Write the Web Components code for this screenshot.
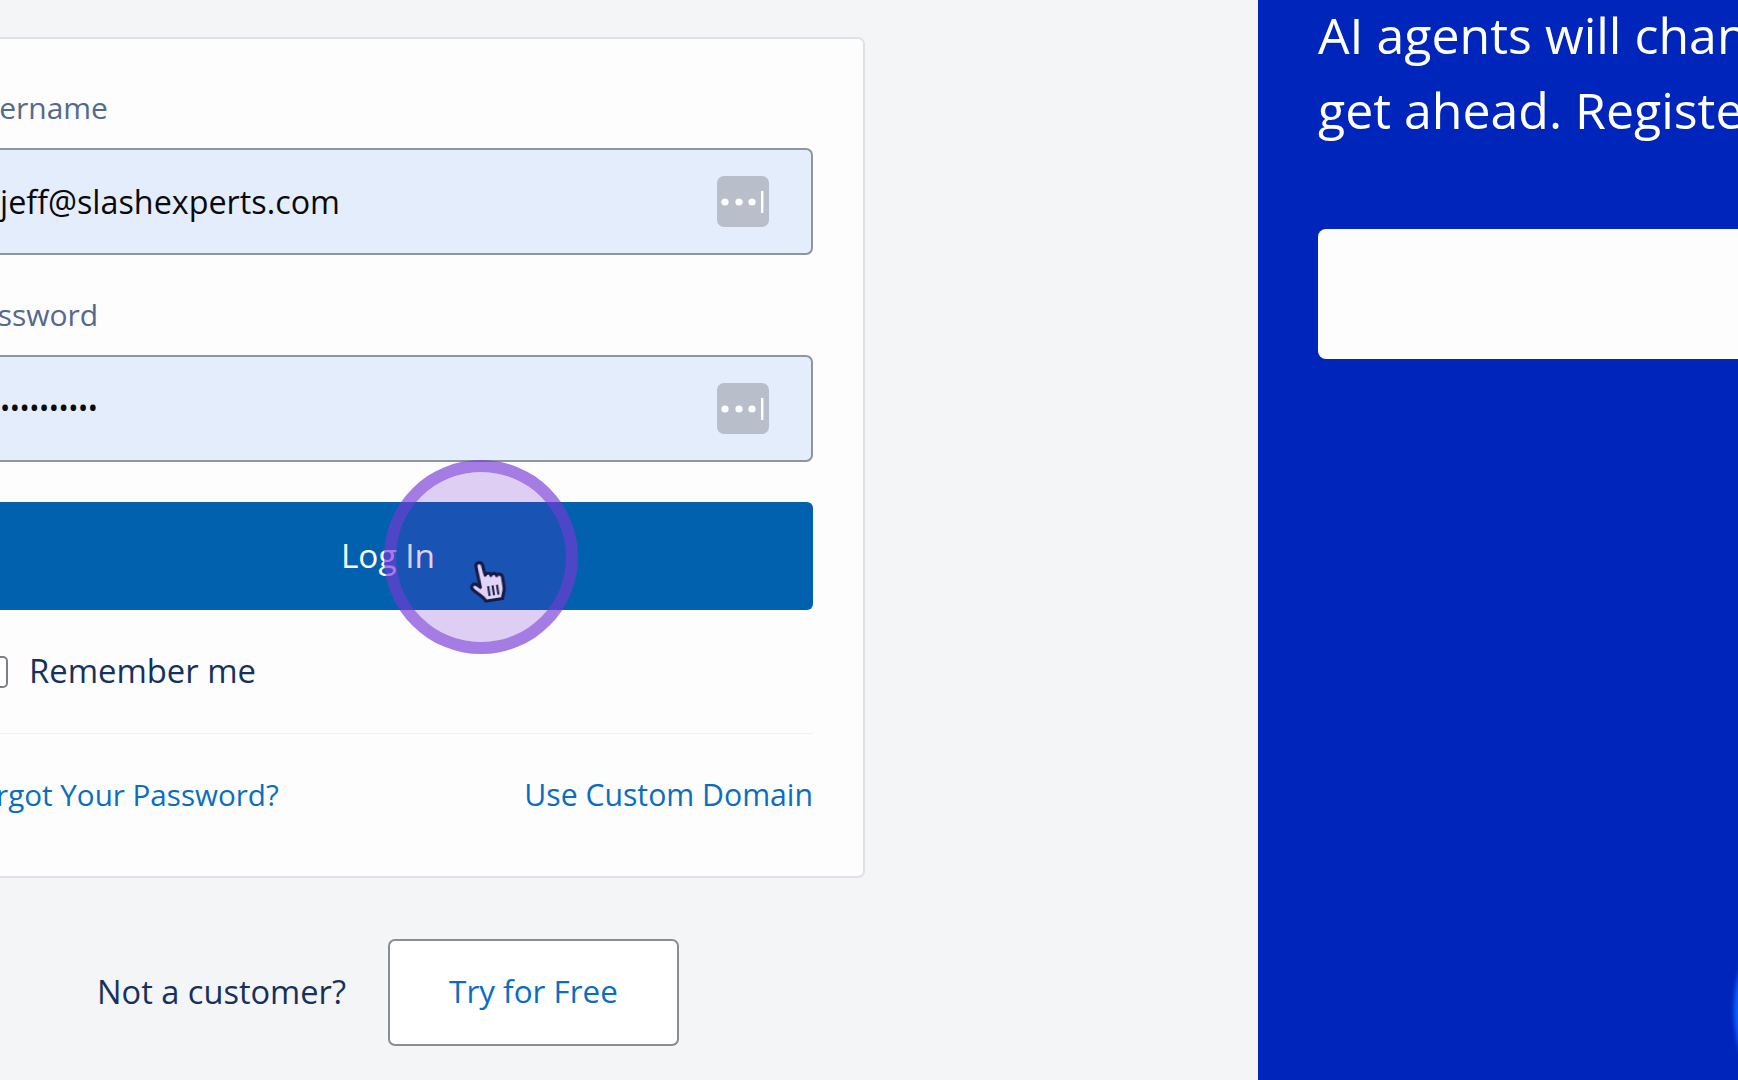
<!DOCTYPE html>
<html>
<head>
<meta charset="utf-8">
<title>Log In</title>
<style>
    html, body { margin: 0; height: 100%; overflow: hidden; }
    body { font-family: "Open Sans", "Liberation Sans", sans-serif; }
</style>
</head>
<body>
<template id="template-key-icon">
    <style>
        :host { display: block; width: 52px; height: 51px; flex: none; }
        svg { display: block; }
    </style>
    <svg width="52" height="51" viewBox="0 0 52 51">
        <rect width="52" height="51" rx="7" fill="#b9bfca"/>
        <circle cx="8" cy="26" r="3.6" fill="#fff"/>
        <circle cx="22" cy="26" r="3.6" fill="#fff"/>
        <circle cx="35" cy="26" r="3.6" fill="#fff"/>
        <rect x="44" y="15" width="2.4" height="22" fill="#fff"/>
    </svg>
</template>

<template id="template-login-field">
    <style>
        :host { display: block; margin-bottom: 41px; }
        label { display: block; height: 38px; line-height: 38px; margin-bottom: 21px; color: #54698d; font-size: 30px; white-space: nowrap; }
        .box {
            display: flex; align-items: center; justify-content: space-between;
            box-sizing: border-box; height: 107px; padding: 0 42px 0 35px;
            background: #e4edfb; border: 2px solid #8f959c; border-radius: 7px;
            color: #0a0a0a; font-size: 32.3px; white-space: nowrap;
        }
        .box span { padding-bottom: 2px; }
    </style>
    <label></label>
    <div class="box"><span><slot></slot></span><key-icon></key-icon></div>
</template>

<template id="template-login-card">
    <style>
        :host {
            display: block; box-sizing: border-box; width: 954px;
            padding: 50px 50px 61px 50px;
            background: #fdfdfe; border: 2px solid #dfe1e6; border-radius: 7px;
        }
        button {
            display: block; width: 100%; height: 108px; margin-top: -1px; padding: 0 0 2px; border: 0; border-radius: 6px;
            background: #0161ae; color: #fff; font: inherit; font-size: 33.4px;
        }
        .remember { display: flex; align-items: center; gap: 21px; margin: 46px 0 45px 13px; height: 32px; color: #16325c; font-size: 32.8px; }
        .remember span:last-child { padding-bottom: 3px; }
        .check { box-sizing: border-box; width: 32px; height: 32px; border: 2px solid #7c7f85; border-radius: 5px; background: #fff; }
        .links { display: flex; justify-content: space-between; border-top: 1px solid #f0f1f4; padding-top: 41px; line-height: 40px; color: #0a6ec0; }
        .forgot { font-size: 29.6px; }
        .domain { font-size: 30.2px; }
    </style>
    <login-field label="Username">jeff@slashexperts.com</login-field>
    <login-field label="Password"><span style="display:block;font-size:27px;letter-spacing:-.4px">••••••••••</span></login-field>
    <button>Log In</button>
    <div class="remember"><span class="check"></span><span>Remember me</span></div>
    <div class="links"><span class="forgot">Forgot Your Password?</span><span class="domain">Use Custom Domain</span></div>
</template>

<template id="template-signup-row">
    <style>
        :host { display: flex; justify-content: center; align-items: center; gap: 42px; margin-top: 61px; color: #16325c; font-size: 32.6px; }
        a { display: flex; align-items: center; justify-content: center; box-sizing: border-box; width: 291px; height: 107px; padding-bottom: 4px; background: #fff; border: 2px solid #8a8d92; border-radius: 7px; color: #0a6ec0; font-size: 31.4px; }
        span { padding-bottom: 2px; }
    </style>
    <span>Not a customer?</span>
    <a>Try for Free</a>
</template>

<template id="template-promo-panel">
    <style>
        :host {
            display: block; position: relative; overflow: hidden; flex: 1; box-sizing: border-box; height: 1080px;
            padding: 0 0 0 60px; background: #0025bb; color: #fff;
        }
        p { margin: -2px 0 81px; font-size: 50px; line-height: 75px; white-space: nowrap; }
        .form { height: 130px; width: 800px; background: #fdfdfe; border-radius: 8px; }
        .glow { position: absolute; left: 476px; top: 860px; width: 300px; height: 300px; border-radius: 50%; background: #0a62ff; filter: blur(2px); }
    </style>
    <p>AI agents will change how you work. Learn how to<br>get ahead. Register for the event today.</p>
    <div class="form"></div>
    <div class="glow"></div>
</template>

<template id="template-click-ring">
    <style>
        :host {
            position: absolute; left: 384px; top: 460px; width: 194px; height: 194px; box-sizing: border-box;
            border: 12px solid rgba(118, 56, 212, .65); border-radius: 50%;
            background: rgba(114, 41, 209, .22); background-clip: padding-box;
        }
        svg { position: absolute; left: 71px; top: 86px; transform: rotate(-9deg); filter: blur(.4px); }
    </style>
    <svg width="43" height="47" viewBox="0 0 38 42">
        <path d="M10 6c0-4 6-4 6 0l1 9c1-2 5-2 5 1 1-2 5-2 5 1 1-2 5-1 5 2l0 9c0 4-2 6-3 10l-15 0c-1-4-6-7-10-12-2-3 1-6 4-4l3 3z" fill="#e3d3f5" stroke="#141b45" stroke-width="2.8" stroke-linejoin="round"/>
        <path d="M18 25v9M22 25v9M26 25v9" stroke="#141b45" stroke-width="1.8" fill="none"/>
    </svg>
</template>

<template id="template-login-page">
    <style>
        :host { display: flex; position: relative; width: 1738px; height: 1080px; background: #f4f5f7; }
        main { flex: none; box-sizing: border-box; width: 1258px; padding-top: 37px; }
        .column { width: 954px; margin-left: -89px; }
    </style>
    <main><div class="column"><login-card></login-card><signup-row></signup-row></div></main>
    <promo-panel></promo-panel>
    <click-ring></click-ring>
</template>

<login-page></login-page>

<script>
    const simple = (tag, templateId) => customElements.define(tag, class extends HTMLElement {
        constructor() {
            super();
            this.attachShadow({ mode: 'open' });
            this.shadowRoot.appendChild(document.getElementById(templateId).content.cloneNode(true));
        }
    });
    simple('key-icon', 'template-key-icon');
    simple('login-card', 'template-login-card');
    simple('signup-row', 'template-signup-row');
    simple('promo-panel', 'template-promo-panel');
    simple('click-ring', 'template-click-ring');
    simple('login-page', 'template-login-page');
    customElements.define('login-field', class extends HTMLElement {
        constructor() {
            super();
            this.attachShadow({ mode: 'open' });
            this.shadowRoot.appendChild(document.getElementById('template-login-field').content.cloneNode(true));
        }
        connectedCallback() {
            this.shadowRoot.querySelector('label').textContent = this.getAttribute('label');
        }
    });
</script>
</body>
</html>
